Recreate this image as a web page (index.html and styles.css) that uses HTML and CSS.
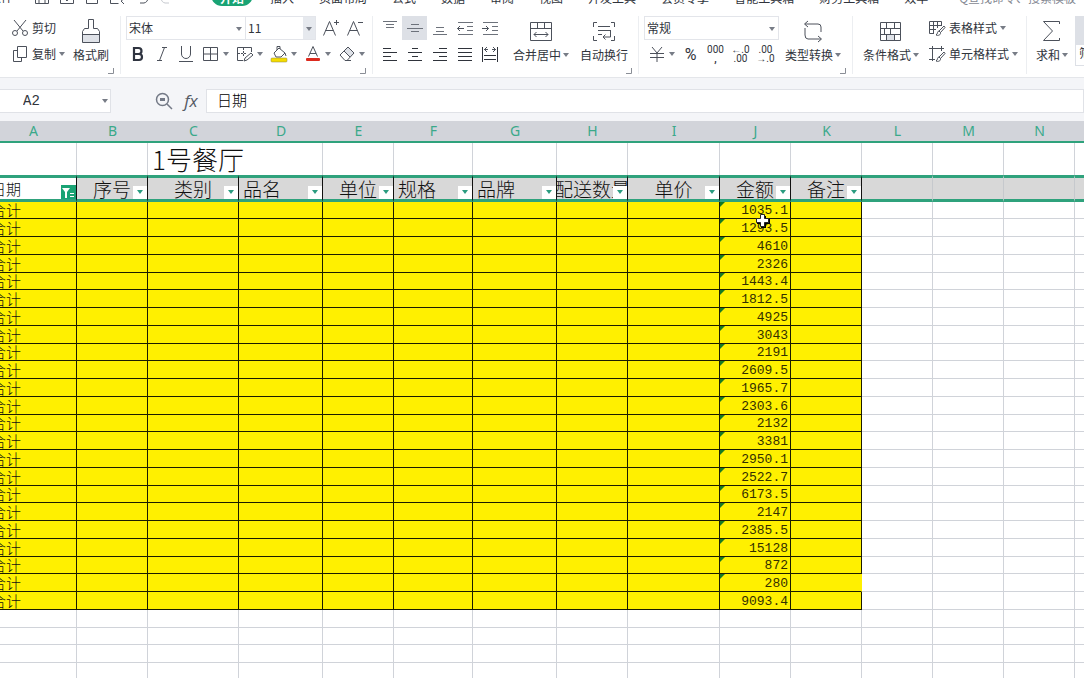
FILE: index.html
```html
<!DOCTYPE html>
<html lang="zh-CN">
<head>
<meta charset="utf-8">
<title>1号餐厅</title>
<link rel="stylesheet" href="styles.css">
</head>
<body>
<svg class="defs" aria-hidden="true">
  <symbol id="caret" viewBox="0 0 6 4"><path d="M0 0h6L3 4z" fill="#777c86"/></symbol>
  <symbol id="corner" viewBox="0 0 6 6"><path d="M5.5 0v5.5H0" fill="none" stroke="#8a8e96"/></symbol>
</svg>
<div class="app">
  <nav class="menu">
    <div class="quick">
      <button class="file">文件</button>
      <svg class="q1" viewBox="0 0 16 16"><path d="M1.500 2v12.500h13V2M5 14V9h6v5"/></svg>
      <svg class="q2" viewBox="0 0 16 16"><path d="M1.500 2v12.500h13V2M5 9l3 3 4-5"/></svg>
      <svg class="q3" viewBox="0 0 16 16"><path d="M2.500 2v12.500h11V2"/></svg>
      <svg class="q4" viewBox="0 0 16 16"><path d="M1.500 2v12.500h8M9 11a3 3 0 1 1 3 1l3 3"/></svg>
      <svg class="q5" viewBox="0 0 16 16"><path d="M2 6h8c5 0 5 7 0 8H6"/></svg>
      <svg class="q6" viewBox="0 0 16 16"><path d="M14 6H6c-5 0-5 7 0 8h4"/></svg>
    </div>
    <button class="tab active">开始</button>
    <button class="tab">插入</button>
    <button class="tab">页面布局</button>
    <button class="tab">公式</button>
    <button class="tab">数据</button>
    <button class="tab">审阅</button>
    <button class="tab">视图</button>
    <button class="tab">开发工具</button>
    <button class="tab">会员专享</button>
    <button class="tab">智能工具箱</button>
    <button class="tab">财务工具箱</button>
    <button class="tab">效率</button>
    <button class="tab find">Q查找命令、搜索模板</button>
  </nav>

  <div class="ribbon">
    <section class="group clip">
      <div class="stack">
        <button class="line"><svg width="18" height="18" viewBox="0 0 18 18"><g class="s"><path d="M3 1l9 11M15 1L6 12"/><circle cx="4" cy="14" r="2.500"/><circle cx="14" cy="14" r="2.500"/></g></svg>剪切</button>
        <button class="line"><svg width="18" height="18" viewBox="0 0 18 18"><g class="s"><path d="M6.500 1.500h9v11h-9z"/><path d="M6 5.500H2.500v11h8V13"/></g></svg>复制<svg class="caret"><use href="#caret"/></svg></button>
      </div>
      <button class="big"><svg width="24" height="26" viewBox="0 0 24 26"><path d="M3.500 16.500h17v8h-17z" fill="#dfe2e8"/><path class="s" d="M9.500 1.500h5v9h4l2 3v11h-17v-11l2-3h4zM3.500 16.500h17"/></svg><span>格式刷</span></button>
      <svg class="launch"><use href="#corner"/></svg>
    </section>

    <section class="group font">
      <div class="stack">
        <div class="bar">
          <span class="pick name"><select aria-label="字体"><option>宋体</option></select><svg class="caret"><use href="#caret"/></svg></span>
          <span class="pick size"><select aria-label="字号"><option>11</option></select><span class="drop"><svg class="caret"><use href="#caret"/></svg></span></span>
          <button class="ic grow" aria-label="增大字号"><svg width="18" height="18" viewBox="0 0 18 18"><path class="s" d="M1.500 16.500l6-14 6 14M3.500 11.500h8M12 3.500h5M14.500 1v5"/></svg></button>
          <button class="ic" aria-label="减小字号"><svg width="18" height="18" viewBox="0 0 18 18"><path class="s" d="M1.500 16.500l6-14 6 14M3.500 11.500h8M12 3.500h5"/></svg></button>
        </div>
        <div class="bar">
          <button class="ic" aria-label="加粗"><svg width="18" height="18" viewBox="0 0 18 18"><path d="M5 3h4.500a3 3 0 0 1 0 6H5zm0 6h5a3 3 0 0 1 0 6H5z" fill="none" stroke="#2f3440" stroke-width="2.200"/></svg></button>
          <button class="ic" aria-label="倾斜"><svg width="18" height="18" viewBox="0 0 18 18"><path class="s" d="M9 2.500h5M4 15.500h5M11.500 2.500l-5 13"/></svg></button>
          <button class="ic" aria-label="下划线"><svg width="18" height="18" viewBox="0 0 18 18"><path class="s" d="M4.500 1v8a4.500 4.500 0 0 0 9 0V1M2 16.500h14"/></svg></button>
          <button class="ic split" aria-label="边框"><svg width="18" height="18" viewBox="0 0 18 18"><path class="s" d="M1.500 2.500h14v13h-14zM8.500 2v14M1 9h15"/></svg><svg class="caret"><use href="#caret"/></svg></button>
          <button class="ic split" aria-label="绘制边框"><svg width="18" height="18" viewBox="0 0 18 18"><path class="s" d="M7 15.500H1.500v-13h14V7"/><path class="s" stroke-dasharray="2 1" d="M2 8.500h8M7.500 3v8"/><path class="s" d="M8 16l1-3 6-5 2 2-6 5z"/></svg><svg class="caret"><use href="#caret"/></svg></button>
          <button class="ic split" aria-label="填充颜色"><svg width="18" height="18" viewBox="0 0 18 18"><path class="s" d="M4 8l5-5 6 5-4 4H6zM7 5V1.500h3V4M15 8l1 3"/><rect x="1" y="13" width="16" height="4" rx="1" fill="#f5dc00" stroke="#8c8740" stroke-width=".5"/></svg><svg class="caret"><use href="#caret"/></svg></button>
          <button class="ic split" aria-label="字体颜色"><svg width="18" height="18" viewBox="0 0 18 18"><path class="s" d="M4.500 11.500L9 1.500l4.500 10M6 8.500h6"/><rect x="2" y="13" width="14" height="3" rx="1" fill="#dc2a1e"/></svg><svg class="caret"><use href="#caret"/></svg></button>
          <button class="ic split" aria-label="清除"><svg width="18" height="18" viewBox="0 0 18 18"><path d="M6 6l4-4 6 6-4 4z" fill="#dfe2e8"/><path class="s" d="M2 10l8-8 6 6-7 7.500H7zM6 6l6 6M8 15.500h5"/></svg><svg class="caret"><use href="#caret"/></svg></button>
        </div>
      </div>
      <svg class="launch"><use href="#corner"/></svg>
    </section>

    <section class="group align">
      <div class="stack">
        <div class="bar">
          <button class="al" aria-label="顶端对齐"><svg width="18" height="18" viewBox="0 0 18 18"><path class="g" d="M2 2.500h14M5 5.500h8M5 8.500h8"/></svg></button>
          <button class="al on" aria-label="垂直居中"><svg width="18" height="18" viewBox="0 0 18 18"><path class="g" d="M5 5.500h8M1 9.500h16M5 12.500h8"/></svg></button>
          <button class="al" aria-label="底端对齐"><svg width="18" height="18" viewBox="0 0 18 18"><path class="g" d="M5 8.500h8M5 12.500h8M2 15.500h14"/></svg></button>
          <button class="al" aria-label="减少缩进"><svg width="18" height="18" viewBox="0 0 18 18"><path class="g" d="M2 3.500h15M11 7.500h6M11 11.500h6M2 15.500h15"/><path class="s" d="M8 9.500H1.500M4 7L1.500 9.500 4 12"/></svg></button>
          <button class="al" aria-label="增加缩进"><svg width="18" height="18" viewBox="0 0 18 18"><path class="g" d="M2 3.500h15M11 7.500h6M11 11.500h6M2 15.500h15"/><path class="s" d="M1 9.500h6.500M5 7l2.500 2.500L5 12"/></svg></button>
        </div>
        <div class="bar">
          <button class="al" aria-label="左对齐"><svg width="18" height="18" viewBox="0 0 18 18"><path class="k" d="M2 3.500h8M2 7.500h14M2 11.500h8M2 15.500h14"/></svg></button>
          <button class="al" aria-label="水平居中"><svg width="18" height="18" viewBox="0 0 18 18"><path class="k" d="M6 3.500h6M2 7.500h14M6 11.500h6M2 15.500h14"/></svg></button>
          <button class="al" aria-label="右对齐"><svg width="18" height="18" viewBox="0 0 18 18"><path class="k" d="M8 3.500h8M2 7.500h14M8 11.500h8M2 15.500h14"/></svg></button>
          <button class="al" aria-label="两端对齐"><svg width="18" height="18" viewBox="0 0 18 18"><path class="k" d="M2 3.500h14M2 7.500h14M2 11.500h14M2 15.500h14"/></svg></button>
          <button class="al" aria-label="分散对齐"><svg width="18" height="18" viewBox="0 0 18 18"><path class="k" d="M1.500 2v15M16.500 2v15M3 10.500h12M3 14.500h12"/><path class="s" d="M3 4.500h4M11 4.500h4M6 2L3.500 4.500 6 7M12 2l2.500 2.500L12 7"/></svg></button>
        </div>
      </div>
      <button class="big"><svg width="24" height="26" viewBox="0 0 24 26"><path class="s" d="M1.500 4.500h21v18h-21zM1 10.500h22M8.500 5v5M15.500 5v5M5 16.500h14M7.500 14L5 16.500 7.500 19M16.500 14l2.500 2.500-2.500 2.500"/></svg><span>合并居中<svg class="caret"><use href="#caret"/></svg></span></button>
      <button class="big"><svg width="24" height="26" viewBox="0 0 24 26"><path class="s" d="M5 4.500H1.500V9M19 4.500h3.500V9M1.500 18v4.500H5M22.500 18v4.500H19M6 8.500h12M6 12.500h12M6 16.500h4M18.500 12v7H11M13.500 16.500L11 19l2.500 2.500"/></svg><span>自动换行</span></button>
      <svg class="launch"><use href="#corner"/></svg>
    </section>

    <section class="group number">
      <div class="stack">
        <div class="bar">
          <span class="pick format"><select aria-label="数字格式"><option>常规</option></select><svg class="caret"><use href="#caret"/></svg></span>
        </div>
        <div class="bar">
          <button class="ic split" aria-label="货币"><svg width="18" height="18" viewBox="0 0 18 18"><path class="s" d="M4 2l5 6 5-6M2 8.500h14M2 12.500h14M9 8v9"/></svg><svg class="caret"><use href="#caret"/></svg></button>
          <button class="num pct">%</button>
          <button class="num"><span>000</span><b>,</b></button>
          <button class="num"><span>←.0</span><span>.00</span></button>
          <button class="num"><span>.00</span><span>→.0</span></button>
        </div>
      </div>
      <button class="big"><svg width="24" height="26" viewBox="0 0 24 26"><path class="s" d="M7 3L3.500 6 7 9M4 6h13q3 0 3 3v5M4 10v7q0 4 3 4h13M17 18l3.500 3-3.500 3"/></svg><span>类型转换<svg class="caret"><use href="#caret"/></svg></span></button>
      <svg class="launch"><use href="#corner"/></svg>
    </section>

    <section class="group style">
      <button class="big"><svg width="24" height="26" viewBox="0 0 24 26"><path d="M7 16h8v6H7z" fill="#dfe2e8"/><path class="s" d="M1.500 4.500h20v18h-20zM1 10.500h20M1 16.500h20M7.500 5v5M15.500 5v5M5.500 11v5M11.500 11v5M7.500 17v5M15.500 17v5"/></svg><span>条件格式<svg class="caret"><use href="#caret"/></svg></span></button>
      <div class="stack">
        <button class="line"><svg width="18" height="18" viewBox="0 0 18 18"><path class="s" d="M6 14.500H1.500v-12h12V7M1 6.500h12M1 10.500h7M5.500 3v11M9.500 3v6"/><path class="s" d="M16 7l-5 5 1.500 1.500L17 8.500zM11 12c-2 0-1 3-3 4 2 1 5 0 4.500-2.500"/></svg>表格样式<svg class="caret"><use href="#caret"/></svg></button>
        <button class="line"><svg width="18" height="18" viewBox="0 0 18 18"><path class="s" d="M4.500 1v15M1 3.500h15M13.500 1v5M1 14.500h6"/><path class="s" d="M16 7l-5 5 1.500 1.500L17 8.500zM11 12c-2 0-1 3-3 4 2 1 5 0 4.500-2.500"/></svg>单元格样式<svg class="caret"><use href="#caret"/></svg></button>
      </div>
    </section>

    <section class="group calc">
      <button class="big"><svg width="24" height="26" viewBox="0 0 24 26"><path class="s" d="M19.500 6V3.500h-16l9 9.500-9 9.500h16V20"/></svg><span>求和<svg class="caret"><use href="#caret"/></svg></span></button>
      <button class="filter"><i></i><span>筛选</span></button>
    </section>
  </div>

  <div class="formula">
    <div class="namebox"><input aria-label="名称框" value="A2"><svg class="caret"><use href="#caret"/></svg></div>
    <button class="ic" aria-label="查找"><svg width="18" height="18" viewBox="0 0 18 18"><g fill="none" stroke="#737986" stroke-width="1.500"><circle cx="7.500" cy="7.500" r="6"/><path d="M12 12l5 5"/></g><path d="M5 6h5v3H5z" fill="#737986"/></svg></button>
    <button class="fx">fx</button>
    <input class="edit" aria-label="编辑栏" value="日期">
  </div>

  <main class="sheet">
    <table>
      <colgroup><col class="w87"><col class="w71"><col class="w91"><col class="w84"><col class="w71"><col class="w79"><col class="w84"><col class="w71"><col class="w92"><col class="w71"><col class="w71"><col class="w71"><col class="w71"><col class="w71"><col></colgroup>
      <thead><tr id="letters"></tr></thead>
      <tbody id="head"></tbody>
      <tbody id="data"></tbody>
    </table>
    <svg class="cursor" width="16" height="16" viewBox="0 0 16 16"><path d="M6 3h5v3h4v5h-4v4H6v-4H2V6h4z" fill="#000"/><path d="M5.500 1.500h4v4h4v4h-4v4h-4v-4h-4v-4h4z" fill="#fff" stroke="#222"/></svg>
  </main>
</div>
<script src="sheet.js"></script>
</body>
</html>
```
FILE: styles.css
```css
* { box-sizing: border-box; }
body {
  margin: 0;
  background: #fff;
  color: #30343c;
  font: 12px/16px "Noto Sans CJK SC", sans-serif;
}
button, input, select { font: inherit; color: inherit; border: 0; padding: 0; margin: 0; background: none; outline: 0; }
button { display: flex; align-items: center; white-space: nowrap; }
svg { display: block; flex: none; }
.defs { position: absolute; width: 0; height: 0; }
.s, .s * { fill: none; stroke: #4c515b; }
.g { fill: none; stroke: #6d727b; }
.k { fill: none; stroke: #2f333b; }
.caret { width: 6px; height: 4px; }
.app { height: 100vh; overflow: hidden; display: flex; flex-direction: column; }

/* menu row, scrolled mostly above the window edge */
.menu { flex: none; display: flex; align-items: flex-start; height: 22px; margin-top: -16px; overflow: hidden; white-space: nowrap; }
.quick { flex: none; width: 211px; display: flex; align-items: flex-start; padding-top: 5px; }
.quick svg { width: 16px; height: 16px; margin-right: 9px; fill: none; stroke: #4c515b; }
.quick .q6 { stroke: #c6c9cf; margin: 0; }
.file { width: 34px; height: 16px; margin-left: -11px; margin-right: 11px; }
.tab { flex: none; height: 28px; margin-left: 25px; }
.tab.active { width: 42px; height: 22px; margin: 0 -8px 0 0; padding-top: 6px; justify-content: center; background: #19a374; color: #fff; font-weight: bold; border-radius: 11px; }
.tab.find { margin-left: 31px; color: #858993; }

.ribbon { flex: none; display: flex; height: 72px; padding-top: 10px; overflow: hidden; border-bottom: 1px solid #e4e6ea; }
.group { flex: none; position: relative; display: flex; align-items: flex-start; height: 58px; border-right: 1px solid #eceef1; }
.clip { width: 121px; padding-left: 11px; }
.font { width: 252px; padding-left: 5px; }
.align { width: 266px; padding-left: 4px; }
.number { width: 214px; padding-left: 5px; }
.style { width: 174px; padding-left: 10px; }
.calc { flex: 1 0 58px; padding-left: 9px; border: 0; }
.stack { flex: none; display: flex; flex-direction: column; gap: 2px; }
.bar { display: flex; height: 24px; }
.line { height: 24px; gap: 3px; }
.big { flex-direction: column; height: 52px; padding-top: 2px; }
.big span { display: flex; align-items: center; gap: 2px; height: 22px; }
.clip .big { margin-left: 8px; }
.align .big { margin-left: 11px; }
.number .big { margin-left: 6px; }
.style .stack { margin-left: 9px; }
.launch { position: absolute; right: 6px; bottom: 0; width: 6px; height: 6px; }
.ic { width: 24px; height: 24px; justify-content: center; }
.ic.grow { margin-left: 3px; }
.ic.split { width: 34px; gap: 3px; }
.pick { position: relative; display: flex; height: 24px; border: 1px solid #e3e5ea; }
.pick select { appearance: none; width: 100%; padding-left: 2px; }
.pick .caret { position: absolute; right: 3px; top: 10px; }
.name { width: 120px; }
.size { width: 70px; border-left: 0; }
.format { width: 135px; }
.drop { position: absolute; right: 0; top: 0; width: 12px; height: 22px; background: #e6e9ee; }
.al { width: 25px; height: 24px; justify-content: center; }
.al.on { background: #dde0e6; }
.num { flex-direction: column; justify-content: center; width: 25px; font: 10px/9px Roboto, sans-serif; }
.num.pct { font-size: 16px; }
.filter { width: 50px; margin-left: 7px; flex-direction: column; align-items: stretch; border: 1px solid #dde0e6; height: 50px; }
.filter i { height: 28px; background: #dde0e6; }
.filter span { padding-left: 3px; text-align: left; }

.formula { flex: none; display: flex; align-items: center; height: 43px; padding: 3px 0 0; background: #f4f5f8; }
.namebox { display: flex; align-items: center; width: 111px; height: 24px; background: #fff; border: 1px solid #e0e2e7; border-left: 0; padding-right: 2px; }
.namebox input { flex: 1; min-width: 0; padding-left: 23px; font: 14px/20px "Liberation Mono", monospace; }
.formula .ic { margin-left: 41px; }
.fx { width: 30px; justify-content: center; font: italic 17px/20px "Open Sans", sans-serif; color: #555a64; }
.edit { flex: 1; height: 24px; background: #fff; border: 1px solid #e0e2e7; padding: 0 0 4px 10px; font-size: 15px; font-weight: 300; color: #000; }

.sheet { position: relative; flex: 1; min-height: 0; overflow: hidden; }
table { table-layout: fixed; border-collapse: separate; border-spacing: 0; width: calc(100% + 10px); min-width: 1156px; margin-left: -10px; color: #111; font-weight: 300; }
.w71 { width: 71px; }
.w79 { width: 79px; }
.w84 { width: 84px; }
.w87 { width: 87px; }
.w91 { width: 91px; }
.w92 { width: 92px; }
th, td { padding: 0; overflow: hidden; white-space: nowrap; font-weight: inherit; }
thead th { height: 22px; background: #d2d4da; border-bottom: 2px solid #2fa27c; color: #3aa98a; font: 14px/20px "Noto Sans", sans-serif; }
td { border-right: 1px solid #d0d3d9; border-bottom: 1px solid #d0d3d9; }
.title td { height: 32px; border-bottom: 0; }
.title .text { padding-left: 4px; font-size: 26px; line-height: 30px; }
.fields th { position: relative; height: 27px; background: #d8d8d8; border-top: 3px solid #2fa27c; border-bottom: 3px solid #2fa27c; border-right: 1px solid #c6c9cd; font-size: 19px; line-height: 21px; }
.fields .named { border-right-color: #111; }
.fields .key { background: #fff; font-size: 15px; }
.fields div { display: flex; justify-content: center; }
.fields .left div { justify-content: flex-start; padding-left: 4px; }
.fields .key div { padding-left: 1px; }
.pull { position: absolute; right: 0; bottom: 0; width: 14px; height: 13px; background: #fff; justify-content: center; }
.pull.on { width: 15px; height: 14px; background: #19a374; }
#data td { height: 18px; font-size: 15px; line-height: 16px; }
#data tr:nth-child(4n+1) td { height: 17px; }
#data .fill { position: relative; background: #fff000; border-color: #1c1c00; }
#data .open { border-right-color: #fff000; }
#data .total { padding: 1px 2px 0 0; text-align: right; color: #332f00; font: 13px/15px "Liberation Mono", monospace; }
#data .label { padding-left: 1px; }
.flag::before { content: ""; position: absolute; left: 0; top: 0; border-top: 5px solid #167a24; border-right: 5px solid transparent; }
.cursor { position: absolute; left: 755px; top: 92px; }
```
FILE: sheet.js
```js
const letters = "ABCDEFGHIJKLMNO".split("");
const fields = ["日期", "序号", "类别", "品名", "单位", "规格", "品牌", "配送数量", "单价", "金额", "备注"];
const leftAligned = [0, 3, 5, 6];
const sums = ["1035.1", "1293.5", "4610", "2326", "1443.4", "1812.5", "4925", "3043", "2191", "2609.5", "1965.7", "2303.6",
  "2132", "3381", "2950.1", "2522.7", "6173.5", "2147", "2385.5", "15128", "872", "280", "9093.4"];

document.getElementById("letters").innerHTML = letters.map(l => `<th scope="col">${l}</th>`).join("");

const arrow = '<svg width="8" height="5" viewBox="0 0 8 5"><path d="M1 0h6L4 4z" fill="#2b9c80"/></svg>';
const funnel = '<svg width="13" height="11" viewBox="0 0 13 11"><path d="M0 1h8L5 5v6H3V5z" fill="#fff"/><path d="M8 6.500h4M8 9.500h4" stroke="#fff"/></svg>';
const fieldCells = letters.map((_, i) => {
  if (!fields[i]) return "<th></th>";
  const cls = "named" + (leftAligned.includes(i) ? " left" : "") + (i === 0 ? " key" : "");
  return `<th class="${cls}" scope="col"><div>${fields[i]}</div><button class="pull${i === 0 ? " on" : ""}" aria-label="筛选${fields[i]}">${i === 0 ? funnel : arrow}</button></th>`;
}).join("");
document.getElementById("head").innerHTML =
  `<tr class="title"><td></td><td></td><td class="text" colspan="2">1号餐厅</td>${"<td></td>".repeat(11)}</tr>
   <tr class="fields">${fieldCells}</tr>`;

let rows = "";
for (let r = 0; r < 28; r++) {
  rows += "<tr>" + letters.map((_, c) => {
    if (r >= sums.length || c > 10) return "<td></td>";
    if (c === 0) return '<td class="fill label">合计</td>';
    if (c === 9) return `<td class="fill total${r < 22 ? " flag" : ""}">${sums[r]}</td>`;
    return `<td class="fill${c === 10 && r === 21 ? " open" : ""}"></td>`;
  }).join("") + "</tr>";
}
document.getElementById("data").innerHTML = rows;
```
